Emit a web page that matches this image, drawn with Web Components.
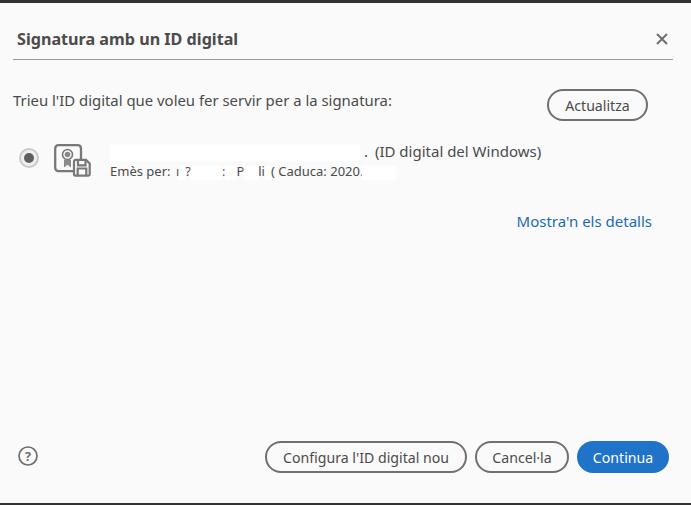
<!DOCTYPE html>
<html><head><meta charset="utf-8"><title>Signatura amb un ID digital</title>
<style>html,body{margin:0;padding:0;background:#fafafa}body{font-family:"Noto Sans","Open Sans",sans-serif}</style>
</head><body>
<sig-dialog heading="Signatura amb un ID digital">
  <sig-intro>
    Trieu l'ID digital que voleu fer servir per a la signatura:
    <sig-button slot="action" style="width:101px">Actualitza</sig-button>
  </sig-intro>
  <sig-id-row source="(ID digital del Windows)" expires="Caduca: 2020."></sig-id-row>
  <sig-link>Mostra'n els detalls</sig-link>
  <sig-button slot="footer" style="width:202px">Configura l'ID digital nou</sig-button>
  <sig-button slot="footer" style="width:94px">Cancel·la</sig-button>
  <sig-button slot="footer" primary style="width:92px">Continua</sig-button>
</sig-dialog>
<script>
function def(name, html, init){
  customElements.define(name, class extends HTMLElement{
    constructor(){super();this.attachShadow({mode:'open'}).innerHTML=html;}
    connectedCallback(){init&&init.call(this,this.shadowRoot);}
  });
}
def('sig-dialog',`<style>
:host{display:flex;flex-direction:column;box-sizing:border-box;width:691px;height:505px;background:#fafafa;border-top:3px solid #323232;border-bottom:2px solid #323232;color:#4b4b4b;overflow:hidden}
header{display:flex;align-items:center;justify-content:space-between;height:41px;padding:15px 5px 0 4px;margin:0 18px 0 13px;border-bottom:1px solid #9a9a9a;box-sizing:content-box}
h1{margin:0;font-size:16.150px;font-weight:700;color:#4b4b4b}
svg{display:block}
main{flex:1;display:flex;flex-direction:column;padding:0 0 0 13px}
footer{display:flex;align-items:center;gap:8px;padding:0 22px 30px 18px;height:32px}
.help{margin-right:auto;display:block;margin-top:-2px}
</style>
<header><h1></h1><svg width="12" height="12" viewBox="0 0 12 12"><path d="M1 1l10 10M11 1L1 11" stroke="#6e6e6e" stroke-width="2" fill="none"/></svg></header>
<main><slot></slot></main>
<footer><svg class="help" width="20" height="20" viewBox="0 0 20 20"><circle cx="10" cy="10" r="9" fill="none" stroke="#6e6e6e" stroke-width="1.700"/><text x="10" y="14.500" text-anchor="middle" font-family="Noto Sans, sans-serif" font-size="12.500" font-weight="700" fill="#6e6e6e">?</text></svg><slot name="footer"></slot></footer>`,
function(r){r.querySelector('h1').textContent=this.getAttribute('heading');});
def('sig-button',`<style>
:host{display:inline-flex;align-items:center;justify-content:center;box-sizing:border-box;height:32px;border-radius:16px;border:2px solid #707070;color:#4b4b4b;font-size:14.150px;white-space:nowrap;background:transparent}
:host([primary]){background:#1f73c9;border-color:#1f73c9;color:#fff}
</style><slot></slot>`);
def('sig-intro',`<style>
:host{display:flex;justify-content:space-between;align-items:flex-start;padding:29px 43px 0 0;height:31px;font-size:14.900px;color:#4b4b4b}
.t{margin-top:1px}
</style><div class="t"><slot></slot></div><slot name="action"></slot>`);
def('sig-id-row',`<style>
:host{display:flex;align-items:flex-start;margin-top:26px;padding-left:6px;color:#4b4b4b}
.radio{width:20px;height:20px;margin-top:2px;box-sizing:border-box;border-radius:50%;background:#efefef;border:2px solid #cacaca;display:flex;align-items:center;justify-content:center;flex:none}
.radio i{display:block;width:10px;height:10px;border-radius:50%;background:#5f5f5f}
svg{display:block;margin:-2px 0 0 15px;flex:none}
.text{margin-left:19px;font-size:15px;line-height:20px;margin-top:-5px}
.l1 span{margin-left:3px}
.l2{font-size:13px;line-height:19px;margin-top:1px;white-space:nowrap}
b{display:inline-block;background:#fff;vertical-align:middle;font-weight:400;box-shadow:0 0 2px #fff}
.one{width:250px;height:16px;margin-right:4px}
.s{height:14px}
</style>
<div class="radio"><i></i></div>
<svg width="37" height="33" viewBox="0 0 37 33" fill="none">
<path d="M27 23V4.500A3.500 3.500 0 0 0 23.500 1.200H4.500A3.500 3.500 0 0 0 1.200 4.500V24A3.500 3.500 0 0 0 4.500 27.200H19" stroke="#787878" stroke-width="2.300"/>
<circle cx="13.500" cy="10.500" r="5" stroke="#787878" stroke-width="1.600"/><circle cx="13.500" cy="10.500" r="2.800" fill="#8a8a8a"/>
<path d="M10 15.500v8l3.500-2.700 3.500 2.700v-8" fill="#8a8a8a"/>
<path d="M20 17.500A1.700 1.700 0 0 1 21.700 15.800H32l3.700 3.700V30A1.700 1.700 0 0 1 34 31.700H21.700A1.700 1.700 0 0 1 20 30Z" fill="#fafafa" stroke="#787878" stroke-width="2.200"/>
<path d="M24 16.500v4.800h7.500v-4.800M23.700 31v-6.500h8.600V31" stroke="#787878" stroke-width="2.200"/>
</svg>
<div class="text"><div class="l1"><b class="one"></b>. <span id="src"></span></div>
<div class="l2">Emès per: <b class="s" style="width:2px;background:none;box-shadow:none"></b>ı<b class="s" style="width:6px"></b>?<b class="s" style="width:31px"></b>:<b class="s" style="width:11px"></b>P<b class="s" style="width:14px"></b>li<b class="s" style="width:6px"></b>( <span id="exp"></span><b class="s" style="width:34px;margin-left:-1px"></b></div></div>`,
function(r){r.getElementById('src').textContent=this.getAttribute('source');r.getElementById('exp').textContent=this.getAttribute('expires');});
def('sig-link',`<style>
:host{display:block;align-self:flex-end;margin:30px 39px 0 0;font-size:15px;line-height:20px;color:#1a6bb5}
</style><slot></slot>`);
</script>
</body></html>
